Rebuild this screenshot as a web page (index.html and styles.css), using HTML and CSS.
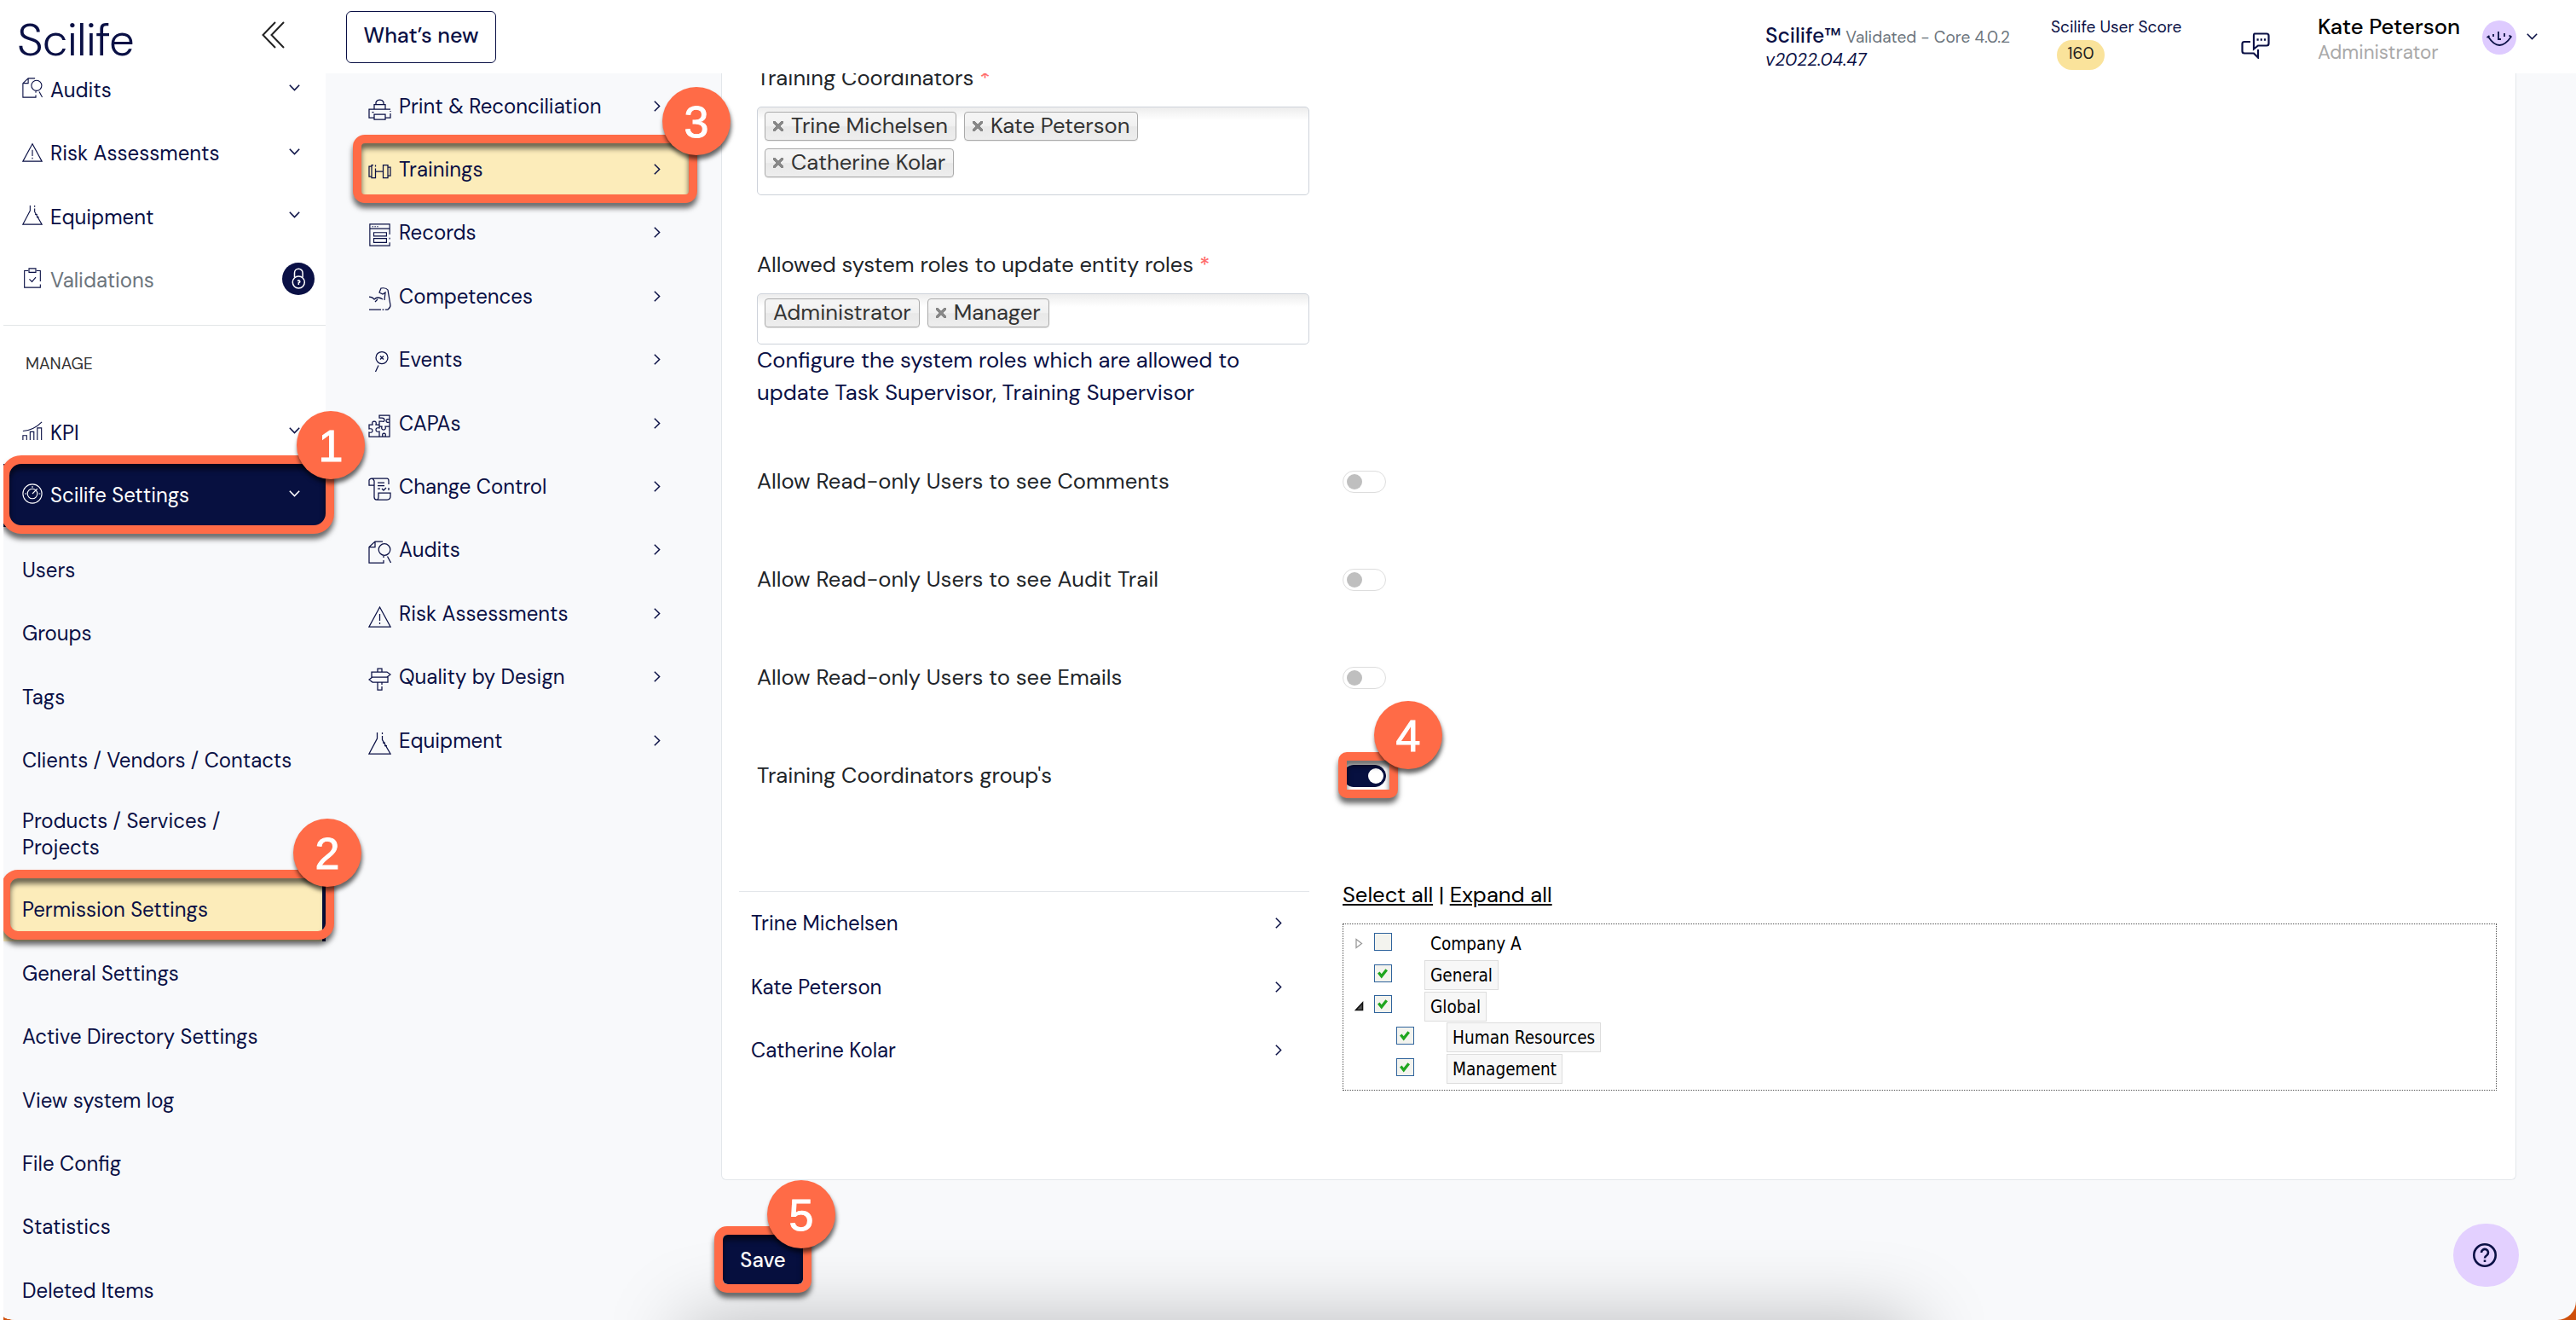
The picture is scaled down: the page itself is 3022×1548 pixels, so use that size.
FILE: index.html
```html
<!DOCTYPE html>
<html lang="en">
<head>
    <meta charset="UTF-8">
    <meta name="viewport" content="width=device-width, initial-scale=1.0">
    <title>Scilife - Permission Settings</title>
    <link rel="stylesheet" href="styles.css">
</head>
<body>

<!-- shared icons -->
<svg width="0" height="0" class="sprite">
    <symbol id="i-down" viewBox="0 0 13 8"><path d="M.8 .8l5.7 5.8L12.2 .8"/></symbol>
    <symbol id="i-right" viewBox="0 0 8 13"><path d="M.8 .8l5.8 5.7L.8 12.2"/></symbol>
    <symbol id="i-audit" viewBox="0 0 27 27"><path d="M17 1H8L1 7.500V26h17v-3M8 1v6.500H1M18 20v-2"/><circle cx="19" cy="10.500" r="6.800"/><path d="M22.500 18.500l4 7.500"/></symbol>
    <symbol id="i-risk" viewBox="0 0 27 27"><path d="M13.500 3L1 26h25zM13.500 11v8M13.500 21v2"/></symbol>
    <symbol id="i-flask" viewBox="0 0 27 27"><path d="M10.500 1v7L1 26h25L16.500 9.500V5M16.500 1v2M17 13h3M19 16.500h3"/></symbol>
    <symbol id="i-clip" viewBox="0 0 27 27"><path d="M8 4H3v22h21v-4M24 18V4h-5M9 1h9v5H9zM9.500 15l3.500 3.500 5-6"/></symbol>
    <symbol id="i-kpi" viewBox="0 0 27 27"><path d="M1 26v-6h5v6M10.500 26V15h5v11M20 26V10h5.500v16M1 14q14-1 25-12"/></symbol>
    <symbol id="i-gauge" viewBox="0 0 27 27"><circle cx="13.500" cy="13.500" r="12.500"/><circle cx="13.500" cy="13.500" r="6.500"/><path d="M13.500 13.500l6.500-6.500M13.500 3.500v2M22 13.500h2M3.500 13.500h2"/></symbol>
    <symbol id="i-print" viewBox="0 0 27 27"><path d="M9 8V6a5 5 0 0 1 9 0v2M7 14V8.500h13V14M26 14H1v10h6M20 24h6v-5M26 17v-1M7 20h13v6H7zM4.500 17.500h2"/></symbol>
    <symbol id="i-bell" viewBox="0 0 27 27"><path d="M4 7H1v12h3M6 5.500H4v15h4.500v-11M8.500 7.500v-2M8.500 13h9M17.500 5.500H23v15h-5.500zM23 8h3v10h-3"/></symbol>
    <symbol id="i-record" viewBox="0 0 27 29"><path d="M26 14V1H1v27h25v-4M26 20v-2M1 6.500h25M4 4h1.500M7 4h1.500M10 4h1.500M6 11.500h16v4.500H6zM6 19h16v5H6z"/></symbol>
    <symbol id="i-arm" viewBox="0 0 27 27"><path d="M1 26h14M16.500 26h2M20 26h3q3-2 3-5L23 3q-2-3-8-2l-2 5 4 2 3-2-1 9M1 11q4 0 6 3 4-4 10 0M8 17l3-3"/></symbol>
    <symbol id="i-event" viewBox="0 0 27 27"><circle cx="16" cy="8.500" r="7"/><path d="M14 6.500l4 4M18 6.500l-4 4M12 17.500L8.500 25"/></symbol>
    <symbol id="i-puzzle" viewBox="0 0 27 27"><path d="M1 12h4q-1-4 2-4t2 4h4V8h3q3 1 3-1.500T16 4h-3V1h12v25H1v-5q4 1 4-2t-4-2zM13 12v4q-4-1-4 2t4 2v6M13 14h3q-1 4 2 4t2-4h5M25 6q-4-1-4 1.500T25 9M17 26q-1-4 1.500-4t1.500 4"/></symbol>
    <symbol id="i-scroll" viewBox="0 0 27 27"><path d="M7 9H1V3q1-2 3-2h18q2 0 2 3v4M7 9V4Q6 1 4 1M7 9v14q0 3 3 3h12q4 0 4-4v-4H12v4q0 4-2 4M24 12v3M11 6h8M11 9.500h8M11 13h3M16 13l2 2 3-3"/></symbol>
    <symbol id="i-sign" viewBox="0 0 27 27"><path d="M11 5V1h5v4M4 5h18l4 3-4 3H4zM23 11v6H5l-4-3 4-3M11 17v9h5v-4M16 20v-3"/></symbol>
</svg>

<div class="window">

    <header class="topbar">
        <div class="logo">Scilife</div>
        <svg class="collapse" viewBox="0 0 27 32"><path d="M16 1L1.500 16 16 31M26 1L11.500 16 26 31"/></svg>
        <a class="whats-new">What’s new</a>
        <div class="version">
            <div><b>Scilife™</b> <span>Validated - Core 4.0.2</span></div>
            <i>v2022.04.47</i>
        </div>
        <div class="score">
            <div>Scilife User Score</div>
            <span class="pill">160</span>
        </div>
        <svg class="chat" viewBox="0 0 34 31"><path d="M16 1.500h14q2.500 0 2.500 2.500v9q0 2.500-2.500 2.500H20l-5 4V4q0-2.500 1-2.500zM11 11H4q-2.500 0-2.500 2.500V22q0 2.500 2.500 2.500h11l5 5V20"/><path class="dots" d="M18.500 8.500h2.200M22.700 8.500h2.200M26.900 8.500h2.200"/></svg>
        <div class="user">
            <b>Kate Peterson</b>
            <span>Administrator</span>
        </div>
        <svg class="avatar" viewBox="0 0 40 40"><circle cx="20" cy="20" r="20"/><path d="M7 19q13 20 27 0M5.500 20l3-2M31.500 17.500l3 2M13 16v3M19 13v9h3M26 15v4"/></svg>
        <svg class="user-arrow"><use href="#i-down"/></svg>
    </header>

    <div class="layout">

        <nav class="sidebar">
            <a class="item"><svg class="ico"><use href="#i-audit"/></svg>Audits<svg class="down"><use href="#i-down"/></svg></a>
            <a class="item"><svg class="ico"><use href="#i-risk"/></svg>Risk Assessments<svg class="down"><use href="#i-down"/></svg></a>
            <a class="item"><svg class="ico"><use href="#i-flask"/></svg>Equipment<svg class="down"><use href="#i-down"/></svg></a>
            <a class="item locked"><svg class="ico"><use href="#i-clip"/></svg>Validations
                <svg class="lock" viewBox="0 0 38 38"><circle class="disc" cx="19" cy="19" r="19"/><path d="M14.500 17v-5a4.800 4.800 0 0 1 9.600 0v5"/><circle cx="19.300" cy="23" r="7"/><path d="M18 21.500q1.500-1.500 2.500 0t-1.200 2v2.500"/></svg>
            </a>
            <div class="divider"></div>
            <div class="section">MANAGE</div>
            <a class="item kpi"><svg class="ico"><use href="#i-kpi"/></svg>KPI<svg class="down"><use href="#i-down"/></svg></a>
            <a class="item open"><svg class="ico"><use href="#i-gauge"/></svg>Scilife Settings<svg class="down"><use href="#i-down"/></svg></a>
            <div class="submenu">
                <a>Users</a>
                <a>Groups</a>
                <a>Tags</a>
                <a>Clients / Vendors / Contacts</a>
                <a class="tall">Products / Services /<br>Projects</a>
                <a class="active">Permission Settings</a>
                <a>General Settings</a>
                <a>Active Directory Settings</a>
                <a>View system log</a>
                <a>File Config</a>
                <a>Statistics</a>
                <a>Deleted Items</a>
            </div>
        </nav>

        <nav class="modules">
            <a><svg class="ico"><use href="#i-print"/></svg>Print &amp; Reconciliation<svg class="right"><use href="#i-right"/></svg></a>
            <a class="active"><svg class="ico"><use href="#i-bell"/></svg>Trainings<svg class="right"><use href="#i-right"/></svg></a>
            <a><svg class="ico"><use href="#i-record"/></svg>Records<svg class="right"><use href="#i-right"/></svg></a>
            <a><svg class="ico"><use href="#i-arm"/></svg>Competences<svg class="right"><use href="#i-right"/></svg></a>
            <a><svg class="ico"><use href="#i-event"/></svg>Events<svg class="right"><use href="#i-right"/></svg></a>
            <a><svg class="ico"><use href="#i-puzzle"/></svg>CAPAs<svg class="right"><use href="#i-right"/></svg></a>
            <a><svg class="ico"><use href="#i-scroll"/></svg>Change Control<svg class="right"><use href="#i-right"/></svg></a>
            <a><svg class="ico"><use href="#i-audit"/></svg>Audits<svg class="right"><use href="#i-right"/></svg></a>
            <a><svg class="ico"><use href="#i-risk"/></svg>Risk Assessments<svg class="right"><use href="#i-right"/></svg></a>
            <a><svg class="ico"><use href="#i-sign"/></svg>Quality by Design<svg class="right"><use href="#i-right"/></svg></a>
            <a><svg class="ico"><use href="#i-flask"/></svg>Equipment<svg class="right"><use href="#i-right"/></svg></a>
        </nav>

        <main class="content">
            <section class="panel">
                <label class="field-label">Training Coordinators <em>*</em></label>
                <div class="chosen chosen-tall">
                    <span class="chip"><s></s>Trine Michelsen</span>
                    <span class="chip"><s></s>Kate Peterson</span>
                    <span class="chip"><s></s>Catherine Kolar</span>
                </div>

                <label class="field-label second">Allowed system roles to update entity roles <em>*</em></label>
                <div class="chosen">
                    <span class="chip">Administrator</span>
                    <span class="chip"><s></s>Manager</span>
                </div>
                <p class="hint">Configure the system roles which are allowed to<br>update Task Supervisor, Training Supervisor</p>

                <div class="switches">
                    <div class="switch-row"><span>Allow Read-only Users to see Comments</span><i class="switch"></i></div>
                    <div class="switch-row"><span>Allow Read-only Users to see Audit Trail</span><i class="switch"></i></div>
                    <div class="switch-row"><span>Allow Read-only Users to see Emails</span><i class="switch"></i></div>
                    <div class="switch-row"><span>Training Coordinators group's</span><i class="switch on"></i></div>
                </div>

                <div class="groups">
                    <div class="people">
                        <a>Trine Michelsen<svg class="right"><use href="#i-right"/></svg></a>
                        <a>Kate Peterson<svg class="right"><use href="#i-right"/></svg></a>
                        <a>Catherine Kolar<svg class="right"><use href="#i-right"/></svg></a>
                    </div>
                    <div class="tree-side">
                        <div class="tree-links"><u>Select all</u> | <u>Expand all</u></div>
                        <div class="tree">
                            <div class="node"><svg class="exp" viewBox="0 0 11 13"><path d="M2 1.500l6.500 5L2 11.500z" fill="none" stroke="#999" stroke-width="1.300"/></svg><i class="check off"></i><span class="name">Company A</span></div>
                            <div class="node"><span class="exp"></span><i class="check"><svg viewBox="0 0 21 21"><path d="M5 10l4 5 7-9"/></svg></i><span class="name sel">General</span></div>
                            <div class="node"><svg class="exp" viewBox="0 0 11 13"><path d="M1.500 10.500h8V2z" fill="#555" stroke="#111" stroke-width="1.600"/></svg><i class="check"><svg viewBox="0 0 21 21"><path d="M5 10l4 5 7-9"/></svg></i><span class="name sel">Global</span></div>
                            <div class="node child"><span class="exp"></span><i class="check"><svg viewBox="0 0 21 21"><path d="M5 10l4 5 7-9"/></svg></i><span class="name sel">Human Resources</span></div>
                            <div class="node child"><span class="exp"></span><i class="check"><svg viewBox="0 0 21 21"><path d="M5 10l4 5 7-9"/></svg></i><span class="name sel">Management</span></div>
                        </div>
                    </div>
                </div>
            </section>
            <button class="save">Save</button>
        </main>
    </div>

    <div class="bottom-shade"></div>

    <div class="help">
        <svg viewBox="0 0 30 30"><circle cx="15" cy="15" r="12.700"/><path d="M11 12a4 4 0 1 1 6.500 3q-2.500 1.500-2.500 3.500"/><path d="M15 20.500v2.500"/></svg>
    </div>
</div>

<!-- step markers -->
<div class="steps">
    <div class="frame frame1"></div>
    <div class="frame frame2"></div>
    <div class="frame frame3"></div>
    <div class="frame frame4"></div>
    <div class="frame frame5"></div>
    <div class="badge badge1">1</div>
    <div class="badge badge2">2</div>
    <div class="badge badge3">3</div>
    <div class="badge badge4">4</div>
    <div class="badge badge5">5</div>
</div>

</body>
</html>
```
FILE: styles.css
```css
* {
    box-sizing: border-box;
}

html {
    background: #cf4f0b;
}

body {
    margin: 0;
    height: 1548px;
    overflow: hidden;
    position: relative;
    border-left: 4px solid #fff;
    font-family: "DM Sans", Inter, "Open Sans", sans-serif;
    font-size: 24px;
    color: #0a1045;
}

svg {
    fill: none;
    stroke: #0a1045;
    stroke-width: 1.5;
    flex: none;
}

.sprite {
    position: absolute;
}

.window {
    height: 1548px;
    position: relative;
    overflow: hidden;
    background: #f8f9fb;
    border-radius: 0 0 22px 16px / 0 0 22px 5px;
}

/* header */
.topbar {
    height: 86px;
    background: #fff;
    display: flex;
    align-items: flex-start;
    position: relative;
    z-index: 2;
}

.logo {
    width: 287px;
    margin-left: 16px;
    padding-top: 14px;
    font-size: 53px;
    line-height: 66px;
    font-weight: 300;
    letter-spacing: -0.8px;
}

.collapse {
    width: 27px;
    height: 32px;
    margin-top: 25px;
    stroke: #222;
    stroke-width: 2;
}

.whats-new {
    width: 176px;
    height: 61px;
    margin: 13px 0 0 72px;
    border: 1.5px solid #0a1045;
    border-radius: 6px;
    text-align: center;
    line-height: 56px;
    font-size: 25px;
    font-weight: 500;
}

.version {
    width: 335px;
    margin-left: auto;
    padding-top: 28px;
    line-height: 28px;
    font-size: 20.6px;
    white-space: nowrap;
}

.version div {
    height: 28px;
}

.version b {
    font-size: 24.6px;
    font-weight: 500;
}

.version span {
    font-size: 19.1px;
    color: #6c757d;
}

.score {
    width: 223px;
    padding-top: 18px;
    font-size: 19.1px;
    line-height: 28px;
}

.pill {
    display: block;
    width: 56px;
    height: 35px;
    margin: 1px 0 0 7px;
    border-radius: 18px;
    background: #fae39b;
    color: #222;
    text-align: center;
    line-height: 31px;
}

.chat {
    width: 34px;
    height: 31px;
    margin: 38px 56px 0 0;
    stroke-width: 2.2;
}

.dots {
    stroke-width: 2.6;
}

.user {
    width: 193px;
    padding-top: 17px;
}

.user b {
    display: block;
    font-size: 25.6px;
    line-height: 29px;
    font-weight: 500;
    color: #000;
}

.user span {
    display: block;
    font-size: 22.4px;
    line-height: 31px;
    color: #a9a9a9;
}

.avatar {
    width: 40px;
    height: 40px;
    margin-top: 24px;
    stroke-width: 1.8;
}

.avatar circle {
    fill: #decbff;
    stroke: none;
}

.user-arrow {
    width: 13px;
    height: 8px;
    margin: 39px 45px 0 12px;
}

/* columns */
.layout {
    display: flex;
    height: 1462px;
}

.sidebar {
    width: 378px;
    margin-top: -17.7px;
    background: #fff;
}

.item {
    height: 74.3px;
    padding-left: 22px;
    display: flex;
    align-items: center;
}

.ico {
    stroke-width: 1.25;
}

.item .ico {
    width: 24px;
    height: 24px;
    margin: -4px 9px 0 0;
}

.down {
    width: 13px;
    height: 8px;
    margin: -4px 30px 0 auto;
}

.locked {
    color: #6c757d;
}

.lock {
    width: 38px;
    height: 38px;
    margin: -3px 13px 0 auto;
    stroke: #fff;
}

.disc {
    fill: #0a1045;
    stroke: none;
}

.divider {
    height: 1px;
    margin-top: 15px;
    background: #e3e6e8;
}

.section {
    height: 89px;
    padding: 30px 0 0 26px;
    font-size: 19px;
    line-height: 30px;
    color: #333;
}

.kpi {
    height: 73.2px;
}

.open {
    background: #071040;
    color: #fff;
    height: 74.4px;
}

.open svg {
    stroke: #fff;
}

.submenu {
    background: #f8f9fb;
    padding-top: 13px;
    height: 930px;
}

.submenu a {
    height: 74.4px;
    padding-left: 22px;
    display: flex;
    align-items: center;
    line-height: 31px;
}

.submenu .tall {
    height: 101px;
    padding-bottom: 2px;
}

.submenu .active {
    background: #fcecba;
    border-right: 4px solid #071040;
}

.modules {
    width: 464px;
    padding: 1px 37px 0 38px;
}

.modules a {
    height: 74.4px;
    padding: 0 34px 0 12px;
    display: flex;
    align-items: center;
}

.modules .active {
    background: #fcecba;
}

.modules .ico {
    width: 27px;
    height: 27px;
    margin: 6px 9px 0 0;
}

.right {
    width: 8px;
    height: 13px;
    margin-left: auto;
}

/* form */
.content {
    width: 2106px;
}

.panel {
    display: flow-root;
    height: 1298px;
    padding-left: 41px;
    background: #fff;
    border: 1px solid #e3e7eb;
    border-top: 0;
    border-radius: 0 0 6px 6px;
    font-size: 25.6px;
    color: #212529;
}

.field-label {
    display: block;
    line-height: 30px;
    margin-top: -9px;
}

.field-label.second {
    margin-top: 67px;
}

.field-label em {
    color: #ff6b6b;
    font-style: normal;
    font-weight: 500;
}

.chosen {
    width: 648px;
    height: 60px;
    margin-top: 18px;
    padding: 5px 8px;
    border: 1px solid #cdd2da;
    border-radius: 5px;
    background: linear-gradient(#eee 1px, #fff 15px);
    display: flex;
    flex-wrap: wrap;
    align-content: flex-start;
    gap: 9px;
}

.chosen-tall {
    height: 104px;
}

.chip {
    height: 34px;
    padding: 0 9px;
    border: 1px solid #aaa;
    border-radius: 4px;
    background: linear-gradient(#f4f4f4 20%, #f0f0f0 50%, #e8e8e8 52%, #eee);
    box-shadow: 0 1px 1px rgba(0, 0, 0, 0.08);
    line-height: 32px;
    color: #333;
    display: flex;
    align-items: center;
}

/* remove cross of a chip */
.chip s {
    width: 12px;
    height: 12px;
    margin-right: 9px;
    background: linear-gradient(45deg, transparent 39%, #888 39%, #888 61%, transparent 61%), linear-gradient(-45deg, transparent 39%, #888 39%, #888 61%, transparent 61%);
}

.hint {
    margin: 0;
    line-height: 38px;
    color: #0a1045;
}

.switches {
    margin-top: 27px;
}

.switch-row {
    height: 115.15px;
    display: flex;
    align-items: center;
}

.switch-row span {
    width: 687px;
}

.switch {
    width: 51px;
    height: 26px;
    border: 1px solid #ddd;
    border-radius: 13px;
    padding: 3.5px;
}

.switch::before {
    content: "";
    display: block;
    width: 18px;
    height: 18px;
    border-radius: 50%;
    background: #bfbfbf;
}

.switch.on {
    background: #071040;
    border-color: #071040;
}

.switch.on::before {
    margin-left: 25px;
    background: #fff;
}

.groups {
    display: flex;
    margin-top: 67px;
    margin-left: -21px;
}

.people {
    width: 669px;
    margin-top: 10px;
    border-top: 1px solid #e3e6ea;
    font-size: 24px;
    color: #0a1045;
}

.people a {
    height: 74.4px;
    padding: 0 32px 0 14px;
    display: flex;
    align-items: center;
}

.tree-side {
    width: 1354px;
    margin-left: 39px;
}

.tree-links {
    line-height: 30px;
    color: #000;
}

.tree {
    height: 196px;
    margin-top: 18px;
    padding: 5px 0 0 13px;
    border: 1px dotted #555;
    font-family: Tahoma, "DejaVu Sans Condensed", "DejaVu Sans", sans-serif;
    font-size: 20.6px;
    color: #000;
}

.node {
    height: 36.7px;
    display: flex;
    align-items: center;
}

.child {
    padding-left: 26px;
}

.exp {
    width: 11px;
    height: 13px;
    margin-right: 12px;
}

.check {
    width: 21px;
    height: 21px;
    margin: -5px 38px 0 0;
    border: 1.5px solid #2f639c;
    background: #f3f3ee;
}

.check svg {
    display: block;
    width: 18px;
    height: 18px;
    stroke: #1fa61f;
    stroke-width: 3.8;
}

.name {
    height: 35px;
    padding: 0 6px;
    line-height: 34px;
    border: 1px solid transparent;
}

.name.sel {
    background: #f7f7f7;
    border-color: #ddd;
}

.save {
    display: block;
    width: 94px;
    height: 58px;
    margin: 64px 0 0 2px;
    padding: 0;
    border: 0;
    border-radius: 6px;
    background: #071040;
    color: #fff;
    font: 500 24px "DM Sans", Inter, sans-serif;
}

.bottom-shade {
    position: absolute;
    left: 800px;
    top: 1548px;
    width: 1440px;
    height: 200px;
    box-shadow: 0 0 90px rgba(0, 0, 0, 0.25);
}

.help {
    position: absolute;
    left: 2874px;
    top: 1435px;
    width: 77px;
    height: 74px;
    border-radius: 38px;
    background: #e3d0ff;
    display: flex;
    align-items: center;
    justify-content: center;
}

.help svg {
    width: 30px;
    height: 30px;
    margin-right: 4px;
    stroke-width: 2.6;
}

/* numbered steps drawn over the page */
.steps {
    position: absolute;
    left: -4px;
    top: 0;
    z-index: 5;
}

.frame {
    position: absolute;
    border: 10px solid #ff6b47;
    border-radius: 22px;
    filter: drop-shadow(0 6px 3px rgba(0, 0, 0, 0.6));
}

.frame1 { left: 1px; top: 534px; width: 391px; height: 92px; border-radius: 24px; }
.frame2 { left: 2px; top: 1020px; width: 390px; height: 82px; border-radius: 19px; }
.frame3 { left: 414px; top: 158px; width: 404px; height: 80px; border-radius: 14px; }
.frame4 { left: 1570px; top: 882px; width: 70px; height: 54px; border-radius: 10px; }
.frame5 { left: 838px; top: 1438px; width: 114px; height: 78px; border-radius: 15px; }

.badge {
    position: absolute;
    width: 80px;
    height: 80px;
    border-radius: 50%;
    background: #ff6b47;
    box-shadow: 1px 5px 5px rgba(0, 0, 0, 0.6);
    color: #fff;
    font: 52px/82px "Liberation Sans", Arial, sans-serif;
    text-align: center;
    -webkit-text-stroke: 1px #fff;
}

.badge1 { left: 348px; top: 482px; }
.badge2 { left: 344px; top: 960px; }
.badge3 { left: 777px; top: 102px; }
.badge4 { left: 1612px; top: 822px; }
.badge5 { left: 900px; top: 1384px; }
```
